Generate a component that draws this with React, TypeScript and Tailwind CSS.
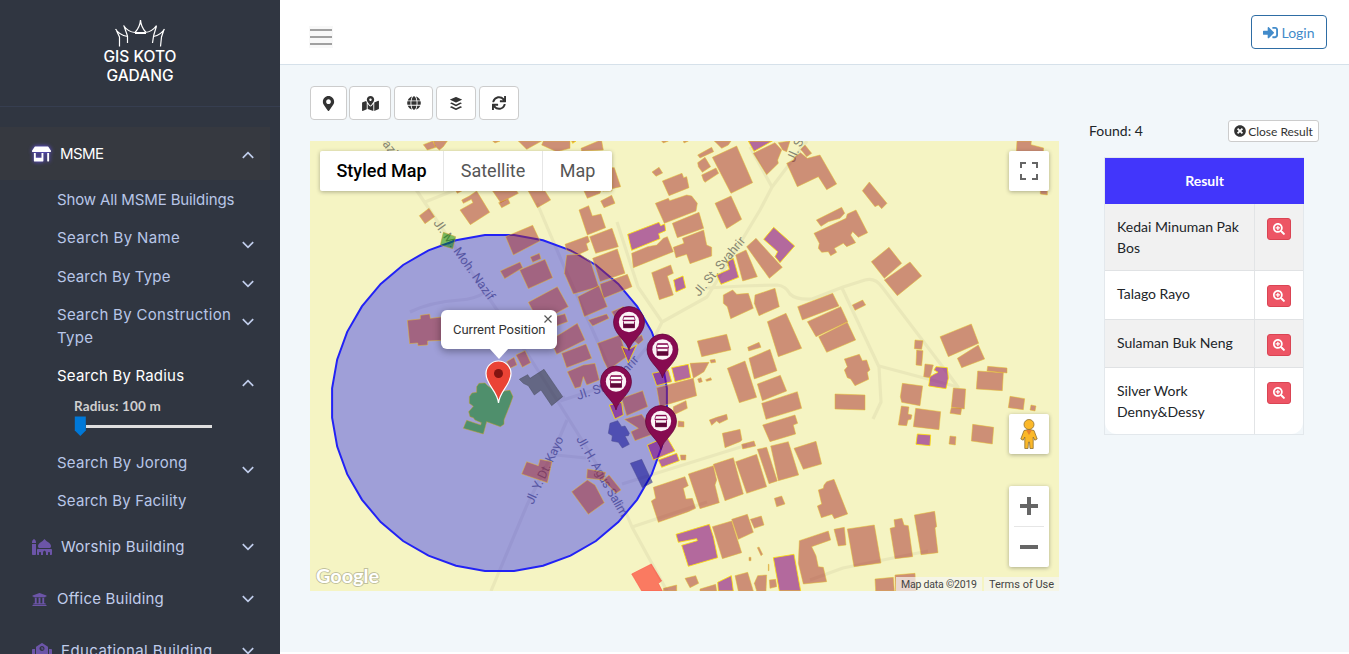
import React from 'react';
import {
  FaMapMarkerAlt, FaMapMarkedAlt, FaGlobe, FaBuffer, FaSync, FaSignInAlt, FaTimesCircle,
  FaSearchPlus, FaStoreAlt, FaMosque, FaUniversity, FaSchool,
} from 'react-icons/fa';

type Tile = { x: number; y: number; brown: string[]; purple?: string[]; green?: string[]; blue?: string[]; dark?: string[]; red?: string[] };

// Building footprints, stored per map tile at three units per pixel.
const tiles: Tile[] = [
  {
    x: 310, y: 140,
    brown: [
      '340,14 368,3 378,22 352,30', '370,3 412,3 400,20 388,30 375,18', '548,3 570,3 555,9', '625,3 695,3 650,28',
      '700,3 780,3 780,25 740,35 695,15', '548,153 620,153 625,160 572,188', '566,188 594,176 600,190 575,203',
      '655,153 705,153 722,180 682,203', '438,153 455,153 442,160',
      '455,180 478,168 500,153 539,217 481,254 450,210 489,188 484,178 460,190', '328,227 357,205 374,230 345,251',
      '587,290 668,256 690,303 610,345', '661,351 688,340 693,356 668,367', '571,393 630,366 638,383 584,416',
      '629,390 705,358 728,413 655,446', '655,487 742,440 775,500 738,520 700,530 670,515',
      '292,541 331,537 331,526 359,522 361,535 395,531 420,531 420,600 353,603 353,615 324,617 323,609 299,611',
      '735,530 765,521 773,545 740,557', '722,600 802,550 825,600 740,643', '590,665 612,652 621,675 600,685', '618,645 645,632 662,668 637,682',
    ],
    green: ['400,277 437,290 428,326 391,315'],
  },
  {
    x: 560, y: 140,
    brown: [
      '63,25 115,3 125,3 130,30 65,33', '72,153 122,153 120,160 82,175', '156,83 163,83 182,140 128,153 156,153',
      '122,183 155,166 165,190 132,203', '57,210 86,197 97,228 123,222 137,263 82,285',
      '15,313 83,288 89,305 79,311 85,330 52,345 20,331', '89,290 156,265 175,320 107,340', '98,355 172,327 195,400 120,425',
      '120,432 202,403 216,440 130,475', '20,345 60,343 92,365 116,440 40,462 13,400', '53,470 117,437 142,500 73,530',
      '5,640 78,612 95,655 20,683', '85,540 140,522 147,535 98,558',
      '155,515 190,500 200,520 170,540', '112,610 180,585 200,650 145,690 130,660', '220,600 245,585 250,600 235,613',
      '276,96 297,82 308,99 288,109', '307,123 347,107 366,100 371,113 380,110 387,143 327,167',
      '286,190 325,175 329,182 380,165 395,168 412,190 408,213 313,250', '337,250 417,217 431,265 352,293',
      '215,340 263,320 290,315 310,295 322,290 340,335 220,383', '340,322 372,310 367,295 431,270 440,315 455,322 455,348 390,371 380,343 348,353',
      '275,398 332,375 340,400 322,408 329,430 340,465 298,479', '413,45 455,22 461,35 420,54', '413,68 435,52 452,80 427,97 415,80',
      '425,105 468,84 476,100 435,127 430,120', '457,52 530,18 578,128 513,160', '465,190 513,168 545,238 500,266',
      '580,40 645,8 665,30 653,60 655,70 620,104', '463,3 513,3 505,15 485,25', '655,8 690,3 680,35 668,30',
      '680,70 700,60 705,50 722,38 742,55 780,45 830,132 800,149 775,110 712,140', '722,28 735,15 755,40 740,50', '305,3 325,3 310,9', '370,3 385,3 372,9',
      '560,320 588,295 667,382 628,415', '527,345 558,330 592,410 548,423', '490,465 518,450 530,463 565,460 580,505 512,536 502,500 490,490',
      '585,465 645,445 658,500 597,527 583,490', '622,545 678,520 725,625 655,650', '713,500 818,460 837,498 727,540',
      '412,603 500,583 513,630 425,650', '563,622 597,607 603,622 566,633', '567,655 630,628 651,692 583,717',
      '450,660 465,658 467,667 453,669',
    ],
    purple: [
      '35,3 48,3 38,10', '203,283 297,247 302,257 314,252 317,272 296,281 300,296 215,331', '341,420 369,408 377,443 348,456', '565,3 637,3 582,34',
      '611,298 641,262 704,318 660,368 645,350 653,335', '470,405 508,388 503,365 520,355 536,412 483,433', '185,620 207,628 230,615 205,668',
    ],
  },
  {
    x: 810, y: 140,
    brown: [
      '157,152 178,126 231,190 215,206 205,195 195,200', '19,240 95,202 104,220 90,235 55,245 33,259',
      '12,280 108,235 112,222 138,210 173,278 145,292 128,275 122,285 137,308 110,320 100,310 73,325 80,337 62,347 55,335 35,337 25,325 28,310',
      '184,365 237,322 275,370 223,415', '223,420 300,366 335,408 262,467', '-8,545 92,500 113,545 18,590', '26,590 112,547 137,600 50,637',
      '127,495 158,480 167,495 135,511', '390,590 484,552 506,610 415,650', '442,655 505,615 524,657 455,683', '315,600 339,602 335,628 313,626',
      '320,630 339,632 335,677 318,675', '103,657 148,643 157,662 170,660 180,690 172,697 176,718 135,737 122,717 112,713 103,690 112,680',
      '621,3 664,3 663,14 701,24 700,35 619,35', '691,150 712,150 712,165 691,162', '345,672 370,675 362,705 360,713 341,710',
    ],
  },
  {
    x: 560, y: 365,
    brown: [
      '22,20 70,0 105,-5 118,45 80,60 70,35 62,65 45,70', '390,-5 447,-8 432,20 400,40', '413,42 423,38 427,50 417,53', '437,44 452,38 455,45 440,49', '290,68 400,40 410,92 300,125',
      '340,125 378,107 382,130 340,150', '185,100 248,77 263,125 200,152', '193,163 245,148 285,205 225,227 213,200 235,190', '355,168 372,170 372,186 354,185',
      '502,10 555,-12 590,97 538,113', '592,57 661,31 680,78 607,107', '605,115 712,80 725,130 618,163', '608,180 705,150 713,175 700,180 707,207 630,230',
      '448,165 470,157 500,148 503,163 478,175 470,168 455,181', '487,205 540,193 546,225 540,230 495,248', '545,238 582,228 587,243 548,252',
      '361,270 378,270 377,285 363,285', '82,312 137,322 130,345 80,340', '130,345 147,330 183,375 168,385', '35,380 82,345 105,360 133,413 85,448',
      '280,367 375,335 385,362 370,370 378,402 397,400 407,430 385,440 295,472 274,408 287,400', '385,327 460,302 470,345 465,360 478,413 420,431',
      '460,298 520,278 550,387 495,407', '527,290 590,268 620,365 560,385', '592,253 620,247 652,348 627,356', '632,243 685,230 716,330 655,347',
      '702,250 768,229 785,297 730,313', '643,400 665,393 675,417 650,425', '457,485 515,468 545,563 487,581', '515,463 562,448 580,502 535,523',
      '571,463 604,453 612,480 583,490', '592,548 597,546 608,568 603,572', '567,577 573,577 573,587 567,587', '625,598 627,598 627,617 625,617', '375,640 407,632 416,655 390,668',
      '718,527 805,498 812,525 755,545 768,572 775,605 790,607 800,650 730,657 715,595', '525,632 563,622 580,678 535,678', '583,655 593,632 620,630 618,678 590,678',
      '628,645 647,643 650,665 630,670', '310,670 350,660 350,678 310,678', '420,672 467,658 470,678 420,678',
    ],
    purple: [
      '277,25 325,15 335,50 290,62', '335,8 385,-2 392,38 345,50', '148,120 185,112 190,150 165,162', '262,240 320,215 345,258 280,285', '295,285 350,265 358,287 305,307',
      '348,508 448,478 460,515 473,578 385,604 365,541 412,527 410,521 355,532', '640,578 702,568 722,678 658,678', '473,652 514,632 520,678 475,678',
    ],
    blue: ['150,175 173,167 185,185 195,183 208,205 205,212 195,213 208,238 187,249 175,232 155,228 157,212 145,205', '211,295 245,283 277,352 247,368'],
    red: ['215,627 274,597 305,648 295,655 307,678 245,678'],
  },
  {
    x: 810, y: 365,
    brown: [
      '75,87 165,90 165,135 75,132', '277,55 338,63 330,122 275,112 271,95', '265,180 274,123 297,126 294,147 306,150 303,163 294,165 290,182',
      '317,130 392,140 387,194 310,185', '430,69 467,72 463,132 424,127', '424,128 455,130 452,149 420,145', '503,18 580,23 577,77 499,72',
      '533,4 591,9 591,24 531,18', '600,94 644,101 640,134 595,128', '663,120 678,123 675,138 660,135', '420,213 438,215 436,240 417,237',
      '488,178 551,187 547,237 484,228', '25,375 40,370 42,360 50,350 72,343 113,447 73,461 66,448 34,458 22,423 35,417', '72,493 103,487 108,540 85,543',
      '112,492 193,480 213,594 132,605', '240,490 255,486 252,464 276,460 282,480 295,482 308,575 255,581',
      '313,450 374,439 380,485 375,488 384,563 333,569', '195,642 250,637 253,678 197,678', '255,630 315,625 318,678 257,678',
    ],
    purple: ['322,207 362,210 360,242 318,238', '378,5 412,8 415,40 408,71 356,63 360,35 372,28 384,22 372,15'],
  },
  {
    x: 310, y: 365,
    brown: ['635,327 650,290 685,302 690,283 726,290 712,353'],
    green: ['500,65 507,55 525,54 533,62 560,80 585,78 600,76 609,95 600,120 590,145 582,165 582,178 571,185 530,170 520,207 460,190 470,166 512,180 514,173 495,165 490,158 480,155 476,140 485,130 490,124 478,115 478,95 486,84 500,82'],
    dark: ['628,43 653,29 660,40 702,13 758,95 725,122 693,75 673,90 655,62 640,55'],
  },
];

const roads = [
  'M384 141 L417 191 L450 240 L497 310 L530 358 L560 405 L585 445 L627 515 L632 527 L667 591',
  'M425 202 L455 190', 'M807 141 L772 187 L760 210 L742 240 L707 297 L662 322 L653 340 L636 360 L600 388 L560 401',
  'M750 147 L772 187', 'M617 222 L638 287 L662 322', 'M707 288 L743 286 L777 285 Q786 286 790 294 Q796 300 812 299 L843 287 L865 280 Q875 277 882 287 L920 337 L958 387 L947 372',
  'M842 288 L879 367 L881 402 L873 419', 'M879 366 L958 387', 'M410 312 Q430 302 460 300 Q475 299 484 293', 'M537 203 L562 262 L597 340 L610 370',
  'M491 591 L527 505 L555 448 L567 420', 'M556 401 L565 397', 'M556 455 L586 458', 'M622 484 L747 445', 'M632 527 L707 502', 'M810 580 L843 568 L928 551',
];

const labels: { t: string; x: number; y: number; r: number; w: number }[] = [
  { t: 'azif', x: 382, y: 144, r: 52, w: 21 },
  { t: 'Jl. M. Moh. Nazif', x: 433, y: 223, r: 54.5, w: 96 },
  { t: 'Jl. St. Syahrir', x: 699, y: 297, r: -50, w: 73 },
  { t: 'Jl. St. Syahrir', x: 794, y: 163, r: -66, w: 74 },
  { t: 'Jl. Y. Dt. Kayo', x: 533, y: 505, r: -65, w: 73 },
  { t: 'Jl. H. Agus Salim', x: 576, y: 439, r: 60, w: 91 },
];

const fills = { brown: '#a52a2a', purple: '#800080', green: '#008000', blue: '#00008b', dark: '#2a2f2f', red: '#ff0000' };
const strokes = { brown: '#e6bf2c', purple: '#ffe000', green: '#c9a227', blue: '#4a4a90', dark: '#4a4f60', red: '#ff5040' };
const kinds = ['brown', 'purple', 'green', 'blue', 'dark', 'red'] as const;

function ShopPin({ x, y }: { x: number; y: number }) {
  return (
    <g transform={`translate(${x} ${y})`}>
      <path d="M0 0 C-2 -10 -15.5 -16 -15.5 -28.5 A15.5 15.5 0 0 1 15.5 -28.5 C15.5 -16 2 -10 0 0Z" fill="#870b51" stroke="#5f0638" strokeWidth=".7" />
      <circle cy="-28.5" r="10.2" fill="#fbf3f6" />
      <path d="M-5 -34.200H5L6 -31V-29.800H-6V-31Z" fill="#fff" stroke="#870b51" strokeWidth=".8" />
      <path d="M-5.200 -33.900H5.200M-6 -30.200H6" stroke="#870b51" strokeWidth="1.3" />
      <path d="M-5.500 -29V-22.800H5.500V-29" fill="none" stroke="#870b51" strokeWidth=".9" />
      <rect x="-5.500" y="-26.800" width="11" height="4.200" fill="#5f0638" />
    </g>
  );
}

function MapDrawing() {
  const pts = Array.from({ length: 36 }, (_, i) => {
    const a = ((i + 0.5) / 36) * Math.PI * 2;
    return `${(499.5 + 168 * Math.cos(a)).toFixed(1)},${(403 + 168.5 * Math.sin(a)).toFixed(1)}`;
  }).join(' ');
  return (
    <svg viewBox="310 141 749 450" className="block h-[450px] w-[749px]">
      <rect x="310" y="141" width="749" height="450" fill="#f5f4c3" />
      <g fill="none" stroke="#eae8b9" strokeWidth="3.2" strokeLinejoin="round">{roads.map((d) => <path key={d} d={d} />)}</g>
      <g fill="#858571" fontFamily="Roboto, sans-serif" fontSize="12.5">
        {labels.map((l) => (
          <text key={l.t + l.x} transform={`translate(${l.x} ${l.y}) rotate(${l.r})`} textLength={l.w}>{l.t}</text>
        ))}
        <path id="syahrir" d="M578 400 L603 392 Q612 388 624 377 L648 351" fill="none" />
        <text textLength="75"><textPath href="#syahrir">Jl. St. Syahrir</textPath></text>
      </g>
      <polygon points={pts} fill="#0000ff" fillOpacity=".35" stroke="#2222f5" strokeWidth="2" />
      {tiles.map((t) => (
        <g key={`${t.x}-${t.y}`} transform={`translate(${t.x} ${t.y}) scale(.33333)`}>
          {kinds.map((k) => (t[k] ?? []).map((p) => (
            <polygon key={p} points={p} fill={fills[k]} fillOpacity={k === 'purple' ? 0.57 : 0.5} stroke={strokes[k]} strokeOpacity={k === 'purple' ? 0.8 : 0.5} strokeWidth="3" />
          )))}
        </g>
      ))}
      <ShopPin x={629} y={350.5} />
      <ShopPin x={662.5} y={378} />
      <ShopPin x={616} y={410} />
      <ShopPin x={661} y={449.5} />
      <path d="M498.500 403 C497.500 391 486 385 486 373.500 A12.500 12.500 0 0 1 511 373.500 C511 385 499.500 391 498.500 403Z" fill="#ea4335" stroke="#fff" strokeWidth="1.2" />
      <circle cx="498.500" cy="373.500" r="4.500" fill="#811411" />
      <text x="316" y="583" fontFamily="Lato, sans-serif" fontWeight="700" fontSize="19" textLength="63" lengthAdjust="spacingAndGlyphs" fill="#fff" stroke="#8c8c76" strokeOpacity=".5" strokeWidth="1.8" paintOrder="stroke">Google</text>
    </svg>
  );
}

function Chevron({ up = false, className = '' }: { up?: boolean; className?: string }) {
  return (
    <svg viewBox="0 0 12 8" className={`h-2 w-3 shrink-0 ${className}`} fill="none" stroke="#c0cdeb" strokeWidth="1.7">
      <path d={up ? 'M.8 6.800 6 1.600 11.200 6.800' : 'M.8 1.200 6 6.400 11.200 1.200'} />
    </svg>
  );
}

function SubItem({ text, className, chevron = true, open = false }: { text: string; className: string; chevron?: boolean; open?: boolean }) {
  return (
    <div className={`flex items-start justify-between pr-[26px] pl-[57px] text-[15px] leading-[23px] ${open ? 'text-white' : 'text-[#b8c6e8]'} ${className}`}>
      <span className="w-[182px]">{text}</span>
      {chevron && <Chevron up={open} className="mt-[15px]" />}
    </div>
  );
}

function Section({ icon, text, gap, track }: { icon: React.ReactNode; text: string; gap: string; track: string }) {
  return (
    <div className="flex h-[52px] items-center pr-[26px] pl-8 text-[15px] text-[#c0cdeb]">
      <span className={`text-[#6c55a8] ${gap}`}>{icon}</span>
      <span className={`flex-1 whitespace-nowrap ${track}`}>{text}</span>
      <Chevron />
    </div>
  );
}

function Sidebar() {
  return (
    <aside className="h-[654px] w-[280px] shrink-0 overflow-hidden bg-[#303641] font-[Inter,sans-serif]">
      <div className="flex h-[107px] flex-col items-center border-b border-[#363e50] pt-[19px] text-white">
        <svg viewBox="0 0 50 28" className="h-7 w-[50px]" fill="none" stroke="#fff" strokeWidth="1.2">
          <path d="M.5 10 Q4 16 12.500 17.500 L12.500 24 M1 10.500 L4.500 18 V27.500 M8.500 6.500 Q13 13 20 13.500 H30 Q37 13 41.500 6.500 M9 7 L12.500 17 M25.500 1 Q25 8 20 13.500 M25.500 1 Q26 8 31 13.500 M20 14.300 H31 M49.500 10 Q46 16 38.500 17.500 L37.500 24 M49 10.500 L46.500 18 L45.500 27.500 M41.500 7 L38.500 17" />
        </svg>
        <div className="text-center text-[15.500px] leading-[19px] font-medium">GIS KOTO<br />GADANG</div>
      </div>
      <div className="mt-5 flex h-[53px] w-[270px] items-center bg-[#363940] pr-4 pl-8 text-[15px] text-white">
        <FaStoreAlt className="mr-[9px] h-4 w-[19px] text-white drop-shadow-[0_0_2px_#6a55ff]" />
        <span className="flex-1 pt-px tracking-[-0.6px]">MSME</span>
        <Chevron up className="mt-0.5" />
      </div>
      <SubItem text="Show All MSME Buildings" chevron={false} className="mt-2 h-[38px] tracking-[-0.13px]" />
      <SubItem text="Search By Name" className="h-[39px] tracking-[0.36px]" />
      <SubItem text="Search By Type" className="h-[38px] tracking-[0.14px]" />
      <SubItem text="Search By Construction Type" className="h-[61px] tracking-[0.3px]" />
      <SubItem text="Search By Radius" open className="h-[34px] tracking-[0.2px]" />
      <div className="h-[53px] pl-[74px] font-[Lato,sans-serif]">
        <div className="text-[13.500px] leading-[16px] font-bold tracking-[0.15px] text-[#cfcfcf]">Radius: 100 m</div>
        <div className="flex h-5 w-[138px] items-center pt-1">
          <svg viewBox="0 0 12 20" className="h-5 w-3 shrink-0"><path d="M.8 .5 H11.800 V14.500 L6.300 20 L.8 14.500Z" fill="#0078d7" /></svg>
          <div className="h-[3px] flex-1 bg-[#dfdfdf]" />
        </div>
      </div>
      <SubItem text="Search By Jorong" className="h-[38px] tracking-[0.25px]" />
      <SubItem text="Search By Facility" chevron={false} className="h-[32px] tracking-[0.18px]" />
      <Section icon={<FaMosque className="h-4 w-5" />} text="Worship Building" gap="mr-[9px]" track="tracking-[0.28px]" />
      <Section icon={<FaUniversity className="size-[15px]" />} text="Office Building" gap="mr-[10px]" track="tracking-[0.2px]" />
      <Section icon={<FaSchool className="h-4 w-5" />} text="Educational Building" gap="mr-[9px]" track="tracking-[0.4px]" />
    </aside>
  );
}

const tools = [
  { w: 'w-[37px]', icon: <FaMapMarkerAlt className="size-[15px]" />, m: 'mr-[2px]' },
  { w: 'w-[42px]', icon: <FaMapMarkedAlt className="h-[15px] w-[17px]" />, m: 'mr-[3px]' },
  { w: 'w-[39px]', icon: <FaGlobe className="size-[14px]" />, m: 'mr-[3px]' },
  { w: 'w-[40px]', icon: <FaBuffer className="h-[15px] w-4" />, m: 'mr-[3px]' },
  { w: 'w-[40px]', icon: <FaSync className="size-[14px]" />, m: '' },
];

const results = [
  { name: 'Kedai Minuman Pak Bos', cls: 'h-[66px] bg-[#f1f1f1]' },
  { name: 'Talago Rayo', cls: 'h-[49px] bg-white' },
  { name: 'Sulaman Buk Neng', cls: 'h-[48px] bg-[#f1f1f1]' },
  { name: 'Silver Work Denny&Dessy', cls: 'h-[67px] rounded-b-xl bg-white' },
];

function MapPanel() {
  const box = 'absolute bg-white shadow-[0_1px_4px_rgba(0,0,0,0.3)] rounded-[2px]';
  return (
    <div className="relative h-[450px] w-[749px] overflow-hidden font-[Roboto,sans-serif]">
      <MapDrawing />
      <div className={`${box} top-[10px] left-[10px] flex h-10 text-[18px] leading-10 text-[#565656]`}>
        <div className="w-[124px] border-r border-[#e6e6e6] text-center font-medium text-black">Styled Map</div>
        <div className="w-[99px] border-r border-[#e6e6e6] text-center">Satellite</div>
        <div className="w-[69px] text-center">Map</div>
      </div>
      <div className={`${box} top-[10px] left-[699px] flex size-10 items-center justify-center`}>
        <svg viewBox="0 0 18 18" className="size-[18px]" fill="none" stroke="#666" strokeWidth="2"><path d="M1 6V1H6M12 1H17V6M17 12V17H12M6 17H1V12" /></svg>
      </div>
      <div className={`${box} top-[273px] left-[699px] flex size-10 items-center justify-center`}>
        <svg viewBox="0 0 18 30" className="h-[30px] w-[18px]" fill="#fbb829" stroke="#8d7033" strokeWidth=".8">
          <path d="M4 11.500 Q9 9.500 14 11.500 L17.200 20 L14.800 21.200 L13.200 18 V29.500 H10 L9.500 23 H8.500 L8 29.500 H4.800 V18 L3.200 21.200 L.8 20Z" />
          <path d="M6 11 L9 16 L12 11Z" fill="#e8832d" stroke="none" />
          <circle cx="9" cy="5.500" r="5" />
        </svg>
      </div>
      <div className={`${box} top-[345px] left-[699px] flex h-[81px] w-10 flex-col items-center`}>
        <svg viewBox="0 0 40 81" className="h-[81px] w-10"><path d="M11 18H18V11H22V18H29V22H22V29H18V22H11ZM11 59H29V63H11Z" fill="#666" /><path d="M5 40.500H35" stroke="#e6e6e6" /></svg>
      </div>
      <div className="absolute top-[169px] left-[131px] h-[39px] w-[116px] rounded-[6px] bg-white shadow-[0_2px_7px_1px_rgba(0,0,0,0.3)]">
        <div className="pl-3 text-[13px] leading-[39px] tracking-[-0.05px] whitespace-nowrap text-[#333]">Current Position</div>
        <svg viewBox="0 0 8 8" className="absolute top-[5px] right-[5px] size-2" stroke="#555" strokeWidth="1.2"><path d="M.5 .5 7.500 7.500M7.500 .5 .5 7.500" /></svg>
        <svg viewBox="0 0 20 11" className="absolute top-[38px] left-12 h-[11px] w-5"><path d="M0 0H20L10 11Z" fill="#fff" /></svg>
      </div>
      <div className="absolute right-0 bottom-0 flex h-[14px] gap-[2px] text-[11px] leading-[15px] text-[#444]">
        <div className="w-[86px] bg-[#f5f5f5]/70 pl-[5px] text-[10.500px] tracking-[-0.2px] whitespace-nowrap">Map data ©2019</div>
        <div className="w-[75px] bg-[#f5f5f5]/70 pl-[5px] whitespace-nowrap">Terms of Use</div>
      </div>
    </div>
  );
}

export default function App() {
  return (
    <div className="flex h-[654px] w-[1349px] overflow-hidden bg-[#f2f7fa] font-[Lato,sans-serif] text-[#212529]">
      <Sidebar />
      <div className="flex flex-1 flex-col">
        <header className="flex h-[65px] items-start justify-between border-b border-[#d6e1ea] bg-white pr-[22px] pl-[29px]">
          <div className="mt-[26px] flex h-[22px] w-6 flex-col items-center justify-center gap-[5px] bg-[#f8f8f8]">
            <i className="block h-[2px] w-[22px] bg-[#a0a0a0]" />
            <i className="block h-[2px] w-[22px] bg-[#a0a0a0]" />
            <i className="block h-[2px] w-[22px] bg-[#a0a0a0]" />
          </div>
          <button className="mt-[15px] flex h-[34px] w-[76px] items-center justify-center gap-[3px] rounded-[4px] border border-[#2e6da4] text-[14px] text-[#428bca]">
            <FaSignInAlt className="size-[15px]" />Login
          </button>
        </header>
        <main className="flex flex-1 pl-[30px]">
          <div className="w-[749px] pt-[21px]">
            <div className="mb-[21px] flex">
              {tools.map((t, i) => (
                <button key={i} className={`flex h-[34px] items-center justify-center rounded-[4px] border border-[#ccc] bg-white text-[#333] ${t.w} ${t.m}`}>{t.icon}</button>
              ))}
            </div>
            <MapPanel />
          </div>
          <aside className="ml-[30px] w-[230px] pt-[55px] text-[14px]">
            <div className="flex h-[22px] items-center justify-between">
              <span className="pb-[2px]">Found: 4</span>
              <button className="flex h-[22px] w-[91px] items-center justify-center gap-[2px] rounded-[3px] border border-[#ccc] bg-white text-[12px] whitespace-nowrap text-[#333]">
                <FaTimesCircle className="size-3" /><span className="pt-px">Close Result</span>
              </button>
            </div>
            <div className="mt-[15px] ml-[15px] w-[200px] border border-[#e3e8ec]">
              <div className="-mr-px h-[46px] bg-[#4236fb] text-center leading-[46px] font-bold text-white">Result</div>
              {results.map((r, i) => (
                <div key={r.name} className={`flex ${i > 0 ? 'border-t border-[#e0e2e4]' : ''} ${r.cls}`}>
                  <div className="w-[150px] border-r border-[#e2e4e6] pt-3 pl-3 leading-[21px]">{r.name}</div>
                  <div className="flex-1 pt-[14px] pl-3">
                    <button className="flex h-[22px] w-6 items-center justify-center rounded-[3px] border border-[#da4453] bg-[#ed5565] text-white"><FaSearchPlus className="size-3" /></button>
                  </div>
                </div>
              ))}
            </div>
          </aside>
        </main>
        <div className="h-[2px] bg-white" />
      </div>
    </div>
  );
}
